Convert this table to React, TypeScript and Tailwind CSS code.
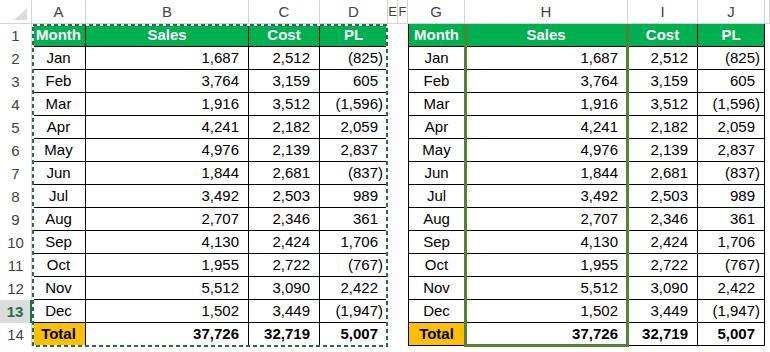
import React from "react";

type Row = [string, string, string, string];

const rows: Row[] = [
  ["Jan", "1,687", "2,512", "(825)"],
  ["Feb", "3,764", "3,159", "605"],
  ["Mar", "1,916", "3,512", "(1,596)"],
  ["Apr", "4,241", "2,182", "2,059"],
  ["May", "4,976", "2,139", "2,837"],
  ["Jun", "1,844", "2,681", "(837)"],
  ["Jul", "3,492", "2,503", "989"],
  ["Aug", "2,707", "2,346", "361"],
  ["Sep", "4,130", "2,424", "1,706"],
  ["Oct", "1,955", "2,722", "(767)"],
  ["Nov", "5,512", "3,090", "2,422"],
  ["Dec", "1,502", "3,449", "(1,947)"],
];

const total: Row = ["Total", "37,726", "32,719", "5,007"];

const letters = ["A", "B", "C", "D", "E", "F", "G", "H", "I", "J", ""];

function Num({ v, bold }: { v: string; bold?: boolean }) {
  const neg = v.startsWith("(");
  return (
    <div
      className={`border-r border-b border-black text-right pr-[4px] leading-[22px] whitespace-nowrap ${
        bold ? "font-bold" : ""
      }`}
    >
      {v}
      {!neg && <span className="invisible">)</span>}
    </div>
  );
}

function TableCells({ r, kind, leftBorder }: { r: Row; kind: "head" | "data" | "total"; leftBorder?: boolean }) {
  if (kind === "head") {
    return (
      <>
        {r.map((t, i) => (
          <div
            key={i}
            className={`bg-[#00B050] text-white font-bold text-center border-r border-b border-black leading-[22px] ${
              i === 0 && leftBorder ? "border-l" : ""
            }`}
          >
            {t}
          </div>
        ))}
      </>
    );
  }
  const isTotal = kind === "total";
  return (
    <>
      <div
        className={`text-center border-r border-b border-black leading-[22px] ${
          isTotal ? "bg-[#FFC000] font-bold" : ""
        } ${leftBorder ? "border-l" : ""}`}
      >
        {r[0]}
      </div>
      <Num v={r[1]} bold={isTotal} />
      <Num v={r[2]} bold={isTotal} />
      <Num v={r[3]} bold={isTotal} />
    </>
  );
}

export default function App() {
  const header: Row = ["Month", "Sales", "Cost", "PL"];
  const allRows: { r: Row; kind: "head" | "data" | "total" }[] = [
    { r: header, kind: "head" },
    ...rows.map((r) => ({ r, kind: "data" as const })),
    { r: total, kind: "total" },
  ];

  return (
    <div
      className="relative w-[770px] h-[352px] bg-white overflow-hidden text-[15px] text-black"
      style={{ fontFamily: '"Liberation Sans", Arial, sans-serif' }}
    >
      <div className="grid grid-cols-[32px_54px_163px_71px_68px_10px_10px_57px_163px_70px_67px_5px] grid-rows-[24px_repeat(14,23px)]">
        {/* corner */}
        <div className="border-r border-b border-[#d4d4d4] relative">
          <svg width="32" height="24" className="absolute left-0 top-0">
            <polygon points="27,8 27,20 14,20" fill="#dcdcdc" />
          </svg>
        </div>
        {letters.map((l, i) => (
          <div
            key={i}
            className={`border-r border-b border-[#d4d4d4] text-center text-[#444] leading-[23px] overflow-hidden ${
              l === "E" || l === "F" ? "text-[13px]" : ""
            }`}
          >
            {l}
          </div>
        ))}

        {allRows.map((row, idx) => {
          const n = idx + 1;
          const sel = n === 13;
          return (
            <React.Fragment key={idx}>
              <div
                className={`text-center leading-[23px] ${
                  sel
                    ? "bg-[#dcdcdc] text-[#217346] font-bold border-r-2 border-[#217346]"
                    : "text-[#444] border-r border-[#d4d4d4]"
                }`}
              >
                {n}
              </div>
              <TableCells r={row.r} kind={row.kind} />
              <div />
              <div />
              <TableCells r={row.r} kind={row.kind} leftBorder />
              <div />
            </React.Fragment>
          );
        })}
      </div>

      {/* copy marquee around A1:D14 */}
      <svg className="absolute left-[32px] top-[24px] pointer-events-none" width="356" height="323">
        <rect x="1" y="1" width="354" height="321" fill="none" stroke="#ffffff" strokeWidth="2" />
        <rect
          x="1"
          y="1"
          width="354"
          height="321"
          fill="none"
          stroke="#217346"
          strokeWidth="2"
          strokeDasharray="4 3"
        />
      </svg>

      {/* thick border around H1:H14 */}
      <div className="absolute left-[464px] top-[24px] w-[165px] h-[323px] border-l-[3px] border-r-[3px] border-b-[3px] border-[#548235] pointer-events-none" />
    </div>
  );
}
